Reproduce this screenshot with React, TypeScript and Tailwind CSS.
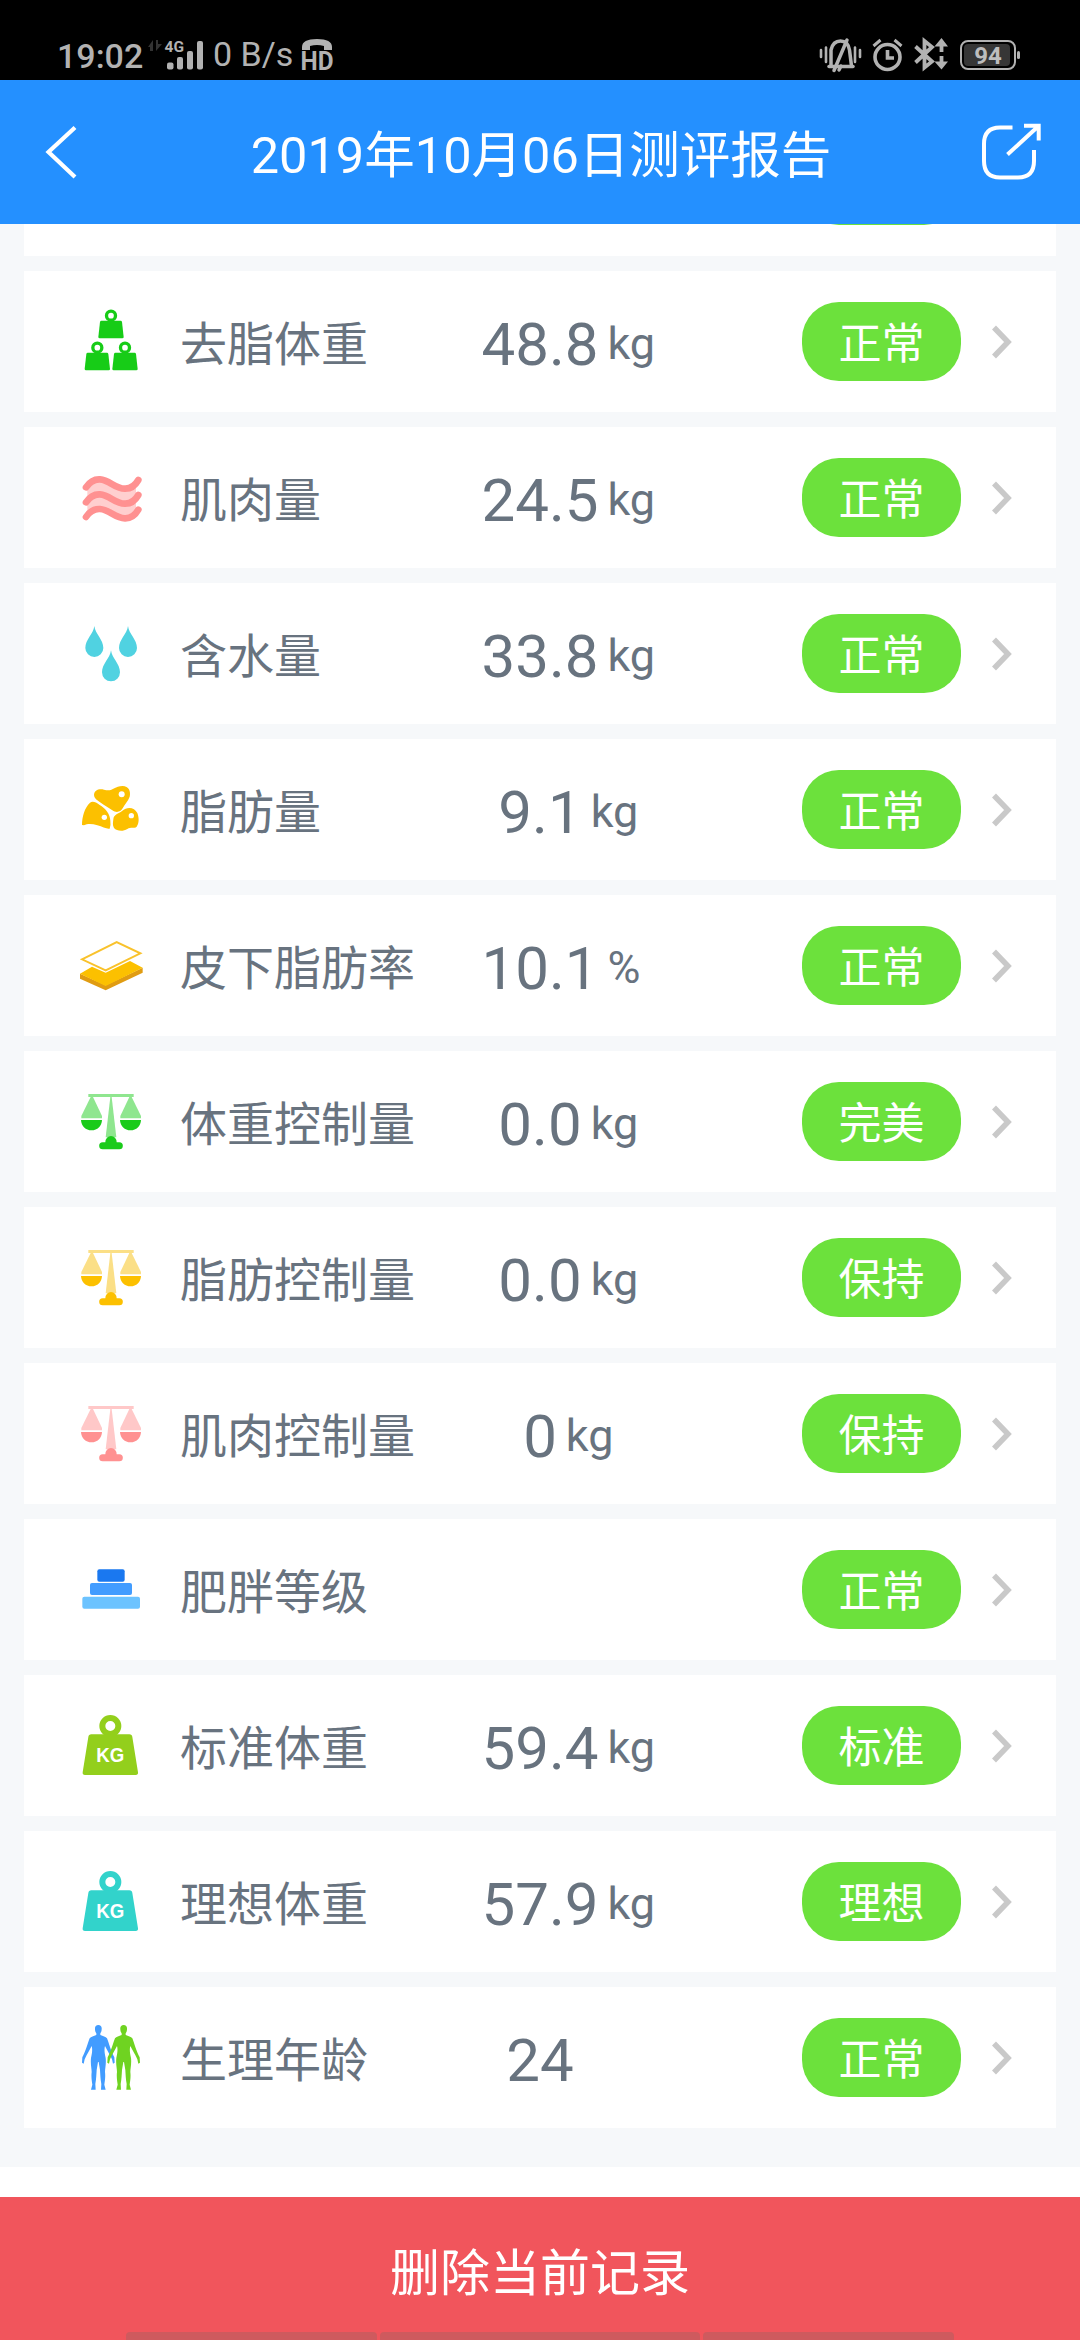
import React from 'react';

/* Metric icons share a 70x141 canvas; shapes are authored at 3x. */
function Icon({ children }: { children: React.ReactNode }) {
  return (
    <svg className="h-[141px] w-[70px] shrink-0" viewBox="48 0 210 423">
      {children}
    </svg>
  );
}

function SmallWeight({ x, y }: { x: number; y: number }) {
  return (
    <g transform={`translate(${x} ${y})`}>
      <circle cx="0" cy="0" r="13.500" fill="none" stroke="#17cc17" strokeWidth="10" />
      <path
        d="M-29 15 H29 Q32 15 33 19 L38 64 Q38 68 34 68 H-34 Q-38 68 -38 64 L-33 19 Q-32 15 -29 15Z"
        fill="#17cc17"
      />
    </g>
  );
}

function LeanIcon() {
  return (
    <Icon>
      <SmallWeight x={153} y={134} />
      <SmallWeight x={112} y={230} />
      <SmallWeight x={195} y={230} />
    </Icon>
  );
}

function MuscleIcon() {
  const wave = 'M78 0 C90 -18 104 -25 120 -24 C150 -22 165 5 196 4 C214 4 226 -6 235 -22';
  return (
    <Icon>
      <path
        d="M82 180 C104 156 125 157 150 172 C180 190 200 190 228 166 V254 C200 280 180 280 150 262 C125 247 104 246 82 270Z"
        fill="#ffcfcf"
      />
      {[181, 226, 270].map((y) => (
        <path
          key={y}
          d={wave}
          transform={`translate(0 ${y})`}
          fill="none"
          stroke="#ff9191"
          strokeWidth="20"
          strokeLinecap="round"
        />
      ))}
    </Icon>
  );
}

function WaterIcon() {
  const drop = 'M0 0 C3 25 27 40 27 66 A27 27 0 0 1 -27 66 C-27 40 -3 25 0 0Z';
  return (
    <Icon>
      <g transform="translate(0 -9)" fill="#50d2e1">
        <path d={drop} transform="translate(103 138)" />
        <path d={drop} transform="translate(204 138)" />
        <path d={drop} transform="translate(153 211)" />
      </g>
    </Icon>
  );
}

function FatIcon() {
  return (
    <Icon>
      <g transform="translate(0 -477)">
        <g fill="#fcc000">
          <path d="M102 645 C102 630 118 625 132 629 C158 637 160 619 188 618 C206 618 213 634 209 650 C204 664 194 672 188 685 C182 697 168 699 157 691 C138 678 120 668 108 658 Q102 653 102 645Z" />
          <path d="M66 735 C66 710 74 683 90 668 C97 662 108 666 118 674 C138 686 150 702 151 722 Q153 738 149 746 C140 748 128 740 112 736 C96 731 82 731 72 736Z" />
          <path d="M160 718 C161 702 176 702 186 693 C202 678 224 682 232 699 C238 716 237 730 230 740 C222 747 212 740 202 747 C188 756 170 753 162 744 C157 736 159 727 160 718Z" />
        </g>
        <g fill="#fff">
          <circle cx="185" cy="643" r="9" />
          <circle cx="133" cy="712" r="8" />
          <circle cx="214" cy="707" r="8" />
        </g>
      </g>
    </Icon>
  );
}

function LayersIcon() {
  return (
    <Icon>
      <g transform="translate(0 -945)">
        <path d="M60 1181 L137 1216 L248 1163 V1178 L137 1231 L60 1196Z" fill="#e09c12" />
        <path d="M60 1181 L96 1160 L137 1178 L210 1143 L248 1163 L137 1218Z" fill="#fcc000" />
        <path
          d="M66 1138 L170 1086 L241 1120 L137 1171Z"
          fill="#fff"
          stroke="#f9c22c"
          strokeWidth="6"
        />
      </g>
    </Icon>
  );
}

function ScaleIcon({ light, dark }: { light: string; dark: string }) {
  return (
    <Icon>
      <g transform="translate(0 -33)">
        <g fill={light}>
          <rect x="85" y="162" width="136" height="9" />
          <path d="M92 171 H99 L126 228 V235 H64 V228Z" />
          <path d="M208 171 H215 L243 228 V235 H181 V228Z" />
          <path d="M151 171 H155 L169 292 H137Z" />
        </g>
        <g fill={dark}>
          <path d="M63 240 H126 C125 258 112 271 94.500 271 C77 271 64 258 63 240Z" />
          <path d="M180 240 H243 C242 258 229 271 211.500 271 C194 271 181 258 180 240Z" />
          <path d="M136 307 A17 19 0 0 1 170 307 H178 A10.500 10.500 0 0 1 178 328 H128 A10.500 10.500 0 0 1 128 307Z" />
        </g>
      </g>
    </Icon>
  );
}

function LevelIcon() {
  return (
    <Icon>
      <g transform="translate(0 -57)">
        <rect x="112" y="208" width="82" height="37" rx="6" fill="#1a78f0" />
        <rect x="90" y="249" width="126" height="36" rx="6" fill="#429cff" />
        <rect x="67" y="290" width="173" height="36" rx="6" fill="#6cc3ff" />
      </g>
    </Icon>
  );
}

function WeightIcon({ color }: { color: string }) {
  return (
    <Icon>
      <g transform="translate(0 -525)">
        <circle cx="151" cy="678" r="24" fill="none" stroke={color} strokeWidth="18" />
        <path
          d="M94 703 H208 Q216 703 217 711 L234 817 Q235 825 227 825 H75 Q67 825 68 817 L85 711 Q86 703 94 703Z"
          fill={color}
        />
        <text
          x="151"
          y="787"
          textAnchor="middle"
          fill="#fff"
          fontFamily="Liberation Sans, sans-serif"
          fontWeight="700"
          fontSize="60"
          textLength="84"
          lengthAdjust="spacingAndGlyphs"
        >
          KG
        </text>
      </g>
    </Icon>
  );
}

function AgeIcon() {
  const body =
    'M0 -13 C7 -13 11 -8 10 0 C10 6 8 9 6 12 V17 C14 21 22 21 26 27 C32 42 38 66 48 84 L49 100 L44 103 L41 90 C34 74 26 62 20 50 C17 60 19 72 22 86 C24 104 20 116 20 128 C22 144 19 156 18 166 L22 181 H8 L9 164 C6 148 6 136 5 122 L1 98 H-1 L-5 122 C-6 136 -6 148 -9 164 L-8 181 H-22 L-18 166 C-19 156 -22 144 -20 128 C-20 116 -24 104 -22 86 C-19 72 -17 60 -20 50 C-26 62 -34 74 -41 90 L-44 103 L-49 100 L-48 84 C-38 66 -32 42 -26 27 C-22 21 -14 21 -6 17 V12 C-8 9 -10 6 -10 0 C-11 -8 -7 -13 0 -13Z';
  return (
    <Icon>
      <g transform="translate(0 -501)">
        <path d={body} transform="translate(115 628)" fill="#429cff" />
        <path d={body} transform="translate(191 628)" fill="#6fd321" />
      </g>
    </Icon>
  );
}

type Metric = {
  icon: React.ReactNode;
  label: string;
  value?: string;
  unit?: string;
  status: string;
};

const METRICS: Metric[] = [
  { icon: <LeanIcon />, label: '去脂体重', value: '48.8', unit: 'kg', status: '正常' },
  { icon: <MuscleIcon />, label: '肌肉量', value: '24.5', unit: 'kg', status: '正常' },
  { icon: <WaterIcon />, label: '含水量', value: '33.8', unit: 'kg', status: '正常' },
  { icon: <FatIcon />, label: '脂肪量', value: '9.1', unit: 'kg', status: '正常' },
  { icon: <LayersIcon />, label: '皮下脂肪率', value: '10.1', unit: '%', status: '正常' },
  { icon: <ScaleIcon light="#8fe68f" dark="#1acb1a" />, label: '体重控制量', value: '0.0', unit: 'kg', status: '完美' },
  { icon: <ScaleIcon light="#fbdf86" dark="#fcc000" />, label: '脂肪控制量', value: '0.0', unit: 'kg', status: '保持' },
  { icon: <ScaleIcon light="#ffc8c8" dark="#ff9191" />, label: '肌肉控制量', value: '0', unit: 'kg', status: '保持' },
  { icon: <LevelIcon />, label: '肥胖等级', status: '正常' },
  { icon: <WeightIcon color="#93cf1c" />, label: '标准体重', value: '59.4', unit: 'kg', status: '标准' },
  { icon: <WeightIcon color="#32d3cb" />, label: '理想体重', value: '57.9', unit: 'kg', status: '理想' },
  { icon: <AgeIcon />, label: '生理年龄', value: '24', status: '正常' },
];

function MetricRow({ icon, label, value, unit, status }: Metric) {
  return (
    <div className="flex h-[141px] items-center bg-white pr-[43px] pl-[52px] text-[#68737f]">
      {icon}
      <div className="ml-[34px] w-[235px] pt-[6px] text-[47px] leading-[60px] whitespace-nowrap">{label}</div>
      <div className="grid w-[250px] grid-cols-[1fr_auto_1fr] items-center">
        <span />
        <span className="pt-[7px] text-[60px] leading-[70px]">{value}</span>
        <span className="pt-[5px] pl-[9px] text-[45px] leading-[56px]">{unit}</span>
      </div>
      <div className="ml-auto flex h-[79px] w-[159px] items-center justify-center rounded-[37px] bg-[#6ce13c] pt-[5px] text-[43px] leading-[60px] text-white">
        {status}
      </div>
      <svg className="ml-[30px] h-[34px] w-[22px]" viewBox="0 0 22 34" fill="none" stroke="#c9c9c9" strokeWidth="5.500">
        <path d="M3 2.500 L17 17 L3 31.500" />
      </svg>
    </div>
  );
}

function StatusBar() {
  return (
    <div className="flex h-[80px] items-end bg-black pr-[60px] pb-[6px] pl-[57px] text-[#b2b2b2]">
      <span className="w-[92px] text-[34px] leading-[36px] font-medium">19:02</span>
      <svg className="h-[40px] w-[60px] overflow-visible" viewBox="149 34 60 40" fill="#b2b2b2">
        <path d="M148 47 L153 40 V51 H150 V47Z M156 40 H158 V44 H162 L156 51Z" fill="#333" />
        <text x="164.500" y="52" fontSize="15.500" fontWeight="700" fontFamily="Roboto, sans-serif">4G</text>
        <rect x="167" y="62.500" width="6.500" height="7" rx="2" />
        <rect x="177" y="57" width="6" height="12.500" rx="2" />
        <rect x="187" y="51" width="6" height="18.500" rx="2" />
        <rect x="197" y="41" width="6" height="28.500" rx="2" />
      </svg>
      <span className="ml-[4px] w-[87px] pb-[2px] text-[34px] leading-[36px] whitespace-nowrap">0 B/s</span>
      <svg className="h-[40px] w-[40px] overflow-visible" viewBox="300 34 40 40" fill="#b2b2b2">
        <path d="M302 50 V47 Q302 39 317 39 Q332 39 332 47 V50 H324 V46 Q317 44 310 46 V50Z" />
        <text x="300.500" y="70" fontSize="26" fontWeight="700" fontFamily="Roboto, sans-serif" textLength="33" lengthAdjust="spacingAndGlyphs">HD</text>
      </svg>
      <div className="ml-auto flex items-end">
        <svg className="h-[42px] w-[142px]" viewBox="818 32 142 42" fill="none" stroke="#b2b2b2" strokeWidth="3">
          <g strokeLinecap="round">
            <path d="M821 50 V57 M826 47.500 V62 M855 47.500 V62 M860 50 V57" strokeWidth="2.600" />
            <path d="M831 66 V50 Q833 41 840.500 41 Q848 41 849.500 50 L851.500 66" strokeWidth="3.500" />
            <path d="M829 66.500 H853" strokeWidth="3.500" />
            <path d="M834 70.500 L847 40 M839 70 L841 66" strokeWidth="3.500" />
          </g>
          <circle cx="887.500" cy="57" r="12.500" strokeWidth="3.600" />
          <path d="M887.500 50 V58 H894" strokeWidth="3.600" />
          <path d="M873.500 46 L880.500 40 M894.500 40 L901.500 46" />
          <path d="M915.500 46.500 L932 61.500 L924.500 67.500 V41 L932 47 L915.500 62.500" strokeWidth="3.800" />
          <path d="M941.500 44 V52 M941.500 56 V64" strokeWidth="3.800" />
          <path d="M934.500 46.500 L941.500 38 L948 46.500Z M934.500 61.500 L941.500 69.500 L948 61.500Z" fill="#b2b2b2" stroke="none" />
        </svg>
        <svg className="h-[42px] w-[60px]" viewBox="960 32 60 42">
          <rect x="961" y="41" width="54" height="28" rx="7" fill="none" stroke="#b2b2b2" strokeWidth="2" />
          <rect x="964" y="44" width="46" height="22" rx="4" fill="#363636" />
          <rect x="1017" y="51" width="3" height="8" rx="1.500" fill="#b2b2b2" />
          <text x="988" y="64" fontSize="24" fontWeight="700" textAnchor="middle" fontFamily="Roboto, sans-serif" fill="#bdbdbd">94</text>
        </svg>
      </div>
    </div>
  );
}

function Header() {
  return (
    <div className="relative z-10 flex h-[144px] items-center justify-between bg-[#2490ff] pr-[36px] pl-[44px] text-white">
      <svg className="h-[60px] w-[40px]" viewBox="44 122 40 60" fill="none" stroke="#fff" strokeWidth="4.200">
        <path d="M75 127.500 L48.500 152 L75 177" />
      </svg>
      <h1 className="pt-[8px] pl-[18px] text-[50.5px] leading-[66px] font-normal whitespace-nowrap">2019年10月06日测评报告</h1>
      <svg className="h-[60px] w-[64px]" viewBox="980 122 64 60" fill="none" stroke="#fff" strokeWidth="4">
        <path d="M1012.500 127.500 H1000 Q984 127.500 984 144 V161 Q984 177.500 1000 177.500 H1018 Q1034 177.500 1034 161 V150" />
        <path d="M1007.500 154.500 L1038 126.500 M1024 125.700 H1038.700 V140.500" />
      </svg>
    </div>
  );
}

export default function App() {
  return (
    <div
      lang="zh-CN"
      className="flex h-[2340px] w-[1080px] flex-col overflow-hidden bg-white font-['Roboto','Noto_Sans_CJK_SC',sans-serif]"
    >
      <StatusBar />
      <Header />
      <div className="flex h-[1943px] flex-col gap-[15px] bg-[#f6f8fa] px-[24px]">
        {/* Row scrolled mostly beneath the header */}
        <div className="flex h-[32px] shrink-0 justify-end bg-white pr-[95px]">
          <div className="-mt-[78px] h-[79px] w-[159px] rounded-[37px] bg-[#6ce13c]" />
        </div>
        {METRICS.map((m) => (
          <MetricRow key={m.label} {...m} />
        ))}
      </div>
      <div className="mt-[30px] flex h-[143px] flex-col items-center justify-between bg-[#f1555c]">
        <div className="pt-[47px] text-[50px] leading-[60px] text-white">删除当前记录</div>
        <div className="flex h-[8px] gap-[3px] overflow-hidden">
          <div className="h-[12px] w-[251px] rounded-[4px] bg-[#ce5a5e]" />
          <div className="h-[12px] w-[320px] rounded-[4px] bg-[#ce5a5e]" />
          <div className="h-[12px] w-[251px] rounded-[4px] bg-[#ce5a5e]" />
        </div>
      </div>
    </div>
  );
}
